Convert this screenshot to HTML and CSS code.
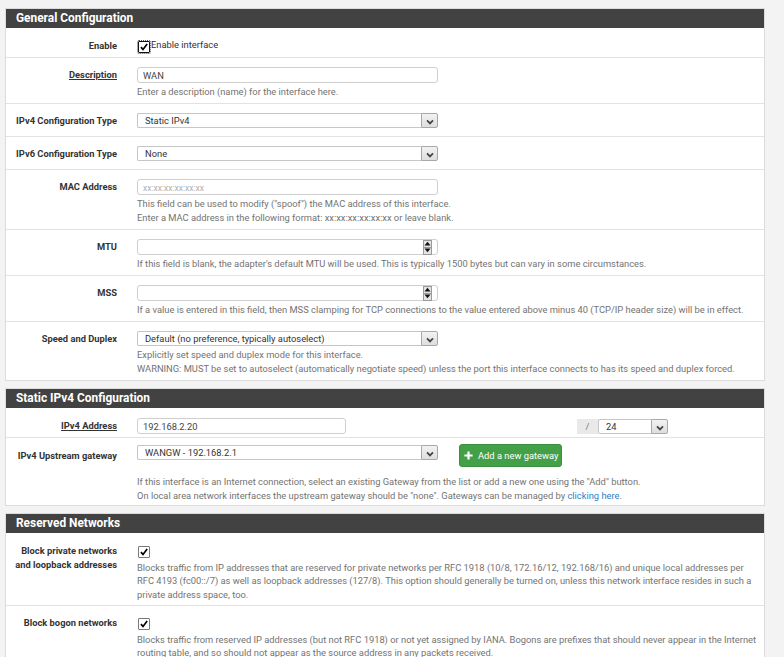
FILE: index.html
```html
<!DOCTYPE html>
<html lang="en">
<head>
<meta charset="utf-8">
<title>Interfaces / WAN</title>
<link rel="stylesheet" href="styles.css">
</head>
<body>
<div class="page">

  <section class="panel">
    <h2 class="panel-title">General Configuration</h2>
    <div class="panel-body">
      <div class="row row-tight">
        <div class="label">Enable</div>
        <div class="field">
          <label class="check-line"><span class="cb cb-focus"><svg viewBox="0 0 12 12" width="12" height="12"><path d="M2.3 6.2 L4.8 8.9 L9.8 2.4" fill="none" stroke="#000" stroke-width="2"/></svg></span>Enable interface</label>
        </div>
      </div>

      <div class="row">
        <div class="label"><span class="req">Description</span></div>
        <div class="field">
          <div class="input"><input type="text" value="WAN"></div>
          <div class="help">Enter a description (name) for the interface here.</div>
        </div>
      </div>

      <div class="row row-select">
        <div class="label">IPv4 Configuration Type</div>
        <div class="field">
          <div class="select"><span class="select-text">Static IPv4</span><span class="select-arrow"><svg viewBox="0 0 8 6" width="8" height="6"><polyline points="1,1.4 4,4.4 7,1.4" fill="none" stroke="#444" stroke-width="1.8"/></svg></span></div>
        </div>
      </div>

      <div class="row row-select">
        <div class="label">IPv6 Configuration Type</div>
        <div class="field">
          <div class="select"><span class="select-text">None</span><span class="select-arrow"><svg viewBox="0 0 8 6" width="8" height="6"><polyline points="1,1.4 4,4.4 7,1.4" fill="none" stroke="#444" stroke-width="1.8"/></svg></span></div>
        </div>
      </div>

      <div class="row">
        <div class="label">MAC Address</div>
        <div class="field">
          <div class="input"><input type="text" placeholder="xx:xx:xx:xx:xx:xx"></div>
          <div class="help">This field can be used to modify ("spoof") the MAC address of this interface.<br>Enter a MAC address in the following format: xx:xx:xx:xx:xx:xx or leave blank.</div>
        </div>
      </div>

      <div class="row">
        <div class="label">MTU</div>
        <div class="field">
          <div class="input num"><input type="text"><span class="spin"><span class="spin-btn"><svg viewBox="0 0 7 5" width="7" height="5"><polygon points="0.5,4.5 3.5,0.8 6.5,4.5" fill="#111"/></svg></span><span class="spin-btn"><svg viewBox="0 0 7 5" width="7" height="5"><polygon points="0.5,0.5 3.5,4.2 6.5,0.5" fill="#111"/></svg></span></span></div>
          <div class="help">If this field is blank, the adapter's default MTU will be used. This is typically 1500 bytes but can vary in some circumstances.</div>
        </div>
      </div>

      <div class="row">
        <div class="label">MSS</div>
        <div class="field">
          <div class="input num"><input type="text"><span class="spin"><span class="spin-btn"><svg viewBox="0 0 7 5" width="7" height="5"><polygon points="0.5,4.5 3.5,0.8 6.5,4.5" fill="#111"/></svg></span><span class="spin-btn"><svg viewBox="0 0 7 5" width="7" height="5"><polygon points="0.5,0.5 3.5,4.2 6.5,0.5" fill="#111"/></svg></span></span></div>
          <div class="help">If a value is entered in this field, then MSS clamping for TCP connections to the value entered above minus 40 (TCP/IP header size) will be in effect.</div>
        </div>
      </div>

      <div class="row">
        <div class="label">Speed and Duplex</div>
        <div class="field">
          <div class="select"><span class="select-text">Default (no preference, typically autoselect)</span><span class="select-arrow"><svg viewBox="0 0 8 6" width="8" height="6"><polyline points="1,1.4 4,4.4 7,1.4" fill="none" stroke="#444" stroke-width="1.8"/></svg></span></div>
          <div class="help">Explicitly set speed and duplex mode for this interface.<br>WARNING: MUST be set to autoselect (automatically negotiate speed) unless the port this interface connects to has its speed and duplex forced.</div>
        </div>
      </div>
    </div>
  </section>

  <section class="panel">
    <h2 class="panel-title">Static IPv4 Configuration</h2>
    <div class="panel-body">
      <div class="row row-tight">
        <div class="label"><span class="req">IPv4 Address</span></div>
        <div class="field addr-field">
          <div class="input addr"><input type="text" value="192.168.2.20"></div>
          <div class="mask">
            <span class="mask-addon">/</span>
            <div class="select select-mask"><span class="select-text">24</span><span class="select-arrow"><svg viewBox="0 0 8 6" width="8" height="6"><polyline points="1,1.4 4,4.4 7,1.4" fill="none" stroke="#444" stroke-width="1.8"/></svg></span></div>
          </div>
        </div>
      </div>

      <div class="row row-gateway">
        <div class="label">IPv4 Upstream gateway</div>
        <div class="field">
          <div class="gw-line">
            <div class="select"><span class="select-text">WANGW - 192.168.2.1</span><span class="select-arrow"><svg viewBox="0 0 8 6" width="8" height="6"><polyline points="1,1.4 4,4.4 7,1.4" fill="none" stroke="#444" stroke-width="1.8"/></svg></span></div>
            <button class="btn-success" type="button"><svg viewBox="0 0 9 9" width="9" height="9"><path d="M3.4 0.4h2.2v3h3v2.2h-3v3h-2.2v-3h-3v-2.2h3z" fill="#fff"/></svg>Add a new gateway</button>
          </div>
          <div class="help">If this interface is an Internet connection, select an existing Gateway from the list or add a new one using the "Add" button.<br>On local area network interfaces the upstream gateway should be "none". Gateways can be managed by <a href="#">clicking here</a>.</div>
        </div>
      </div>
    </div>
  </section>

  <section class="panel">
    <h2 class="panel-title">Reserved Networks</h2>
    <div class="panel-body">
      <div class="row">
        <div class="label">Block private networks<br>and loopback addresses</div>
        <div class="field">
          <label class="check-line"><span class="cb"><svg viewBox="0 0 12 12" width="12" height="12"><path d="M2.3 6.2 L4.8 8.9 L9.8 2.4" fill="none" stroke="#000" stroke-width="2"/></svg></span></label>
          <div class="help help-tight">Blocks traffic from IP addresses that are reserved for private networks per RFC 1918 (10/8, 172.16/12, 192.168/16) and unique local addresses per<br>RFC 4193 (fc00::/7) as well as loopback addresses (127/8). This option should generally be turned on, unless this network interface resides in such a<br>private address space, too.</div>
        </div>
      </div>

      <div class="row">
        <div class="label">Block bogon networks</div>
        <div class="field">
          <label class="check-line"><span class="cb"><svg viewBox="0 0 12 12" width="12" height="12"><path d="M2.3 6.2 L4.8 8.9 L9.8 2.4" fill="none" stroke="#000" stroke-width="2"/></svg></span></label>
          <div class="help help-tight">Blocks traffic from reserved IP addresses (but not RFC 1918) or not yet assigned by IANA. Bogons are prefixes that should never appear in the Internet<br>routing table, and so should not appear as the source address in any packets received.</div>
        </div>
      </div>
    </div>
  </section>

</div>
</body>
</html>
```

FILE: styles.css
```css
* { box-sizing: border-box; }

html, body {
  margin: 0;
  padding: 0;
}

body {
  background: #f3f3f3;
  font-family: Roboto, "Liberation Sans", Arial, sans-serif;
  color: #333;
  font-size: 9.33px;
}

.page {
  padding: 8px 0 0 5px;
  width: 765px;
}

.panel {
  background: #fff;
  border: 1px solid #dcdcdc;
  margin-bottom: 7px;
}

.panel-title {
  margin: 0;
  height: 19px;
  line-height: 19px;
  background: #424242;
  color: #fff;
  font-size: 11.9px;
  font-weight: 700;
  padding-left: 10px;
}

.row {
  display: grid;
  grid-template-columns: 111px 1fr;
  column-gap: 20px;
  padding: 9px 2px 4px 0;
  border-top: 1px solid #e2e2e2;
}

.panel-body .row:first-child {
  border-top: 0;
  padding-top: 10px;
}

.row-tight { padding-bottom: 3px; }
.row-select { padding-bottom: 8px; }

.label {
  text-align: right;
  font-weight: 700;
  color: #333;
  line-height: 14px;
  padding-top: 1px;
}

.req {
  text-decoration: underline;
}

.field {
  min-width: 0;
}

.help {
  margin-top: 2px;
  line-height: 14px;
  color: #737373;
  white-space: nowrap;
}

.help-tight { line-height: 13.3px; margin-top: 2px; }

.help a {
  color: #2d7fc6;
  text-decoration: none;
}

/* text inputs */
.input {
  width: 301px;
  height: 16px;
  border: 1px solid #cfcfcf;
  border-radius: 3px;
  background: #fff;
  display: flex;
  align-items: center;
}

.input input {
  flex: 1;
  min-width: 0;
  height: 100%;
  border: 0;
  outline: 0;
  background: transparent;
  padding: 0 5px;
  font-family: inherit;
  font-size: 9.33px;
  color: #444;
}

.input input::placeholder {
  color: #b0b0b0;
  font-size: 8.5px;
}

.num .spin {
  width: 9px;
  height: 15px;
  margin-right: 5px;
  display: flex;
  flex-direction: column;
}

.spin-btn {
  flex: 1;
  display: flex;
  align-items: center;
  justify-content: center;
  background: #e4e4e4;
  border: 1px solid #9a9a9a;
}

.spin-btn + .spin-btn { border-top: 0; }

/* selects */
.select {
  width: 301px;
  height: 15px;
  display: flex;
}

.select-text {
  flex: 1;
  min-width: 0;
  border: 1px solid #c6c6c6;
  border-right: 0;
  border-radius: 2px 0 0 2px;
  background: #fff;
  padding-left: 7px;
  line-height: 13px;
  color: #333;
  white-space: nowrap;
  overflow: hidden;
}

.select-arrow {
  width: 17px;
  height: 15px;
  border: 1px solid #a8a8a8;
  border-radius: 0 2px 2px 0;
  background: linear-gradient(#f2f2f2, #dedede);
  display: flex;
  align-items: center;
  justify-content: center;
  padding-top: 2px;
}

/* checkboxes */
.check-line {
  display: flex;
  align-items: flex-start;
  height: 16px;
  line-height: 14px;
  color: #333;
}

.cb {
  width: 12px;
  height: 12px;
  margin: 3px 1px 0 1px;
  border: 1px solid #7a7a7a;
  border-radius: 1px;
  background: #fff;
  display: flex;
  align-items: center;
  justify-content: center;
  flex: none;
}

.cb svg { width: 10px; height: 10px; }

.cb-focus {
  border: 1px solid #111;
  outline: 1px dotted #555;
}

/* ipv4 address */
.addr-field {
  display: flex;
}

.addr { width: 209px; }

.mask {
  display: flex;
  margin-left: 231px;
  margin-top: 1px;
}

.mask-addon {
  width: 21px;
  height: 15px;
  background: #e9e9e9;
  color: #777;
  text-align: center;
  line-height: 15px;
}

.select-mask { width: 70px; }

/* gateway */
.row-gateway {
  padding-top: 6px;
  padding-bottom: 2px;
}

.row-gateway .label { padding-top: 5px; }

.gw-line {
  display: flex;
  align-items: flex-start;
  gap: 21px;
}

.gw-line .select { margin-top: 1px; }

.row-gateway .help { margin-top: 8px; }

.btn-success {
  display: flex;
  align-items: center;
  gap: 5px;
  height: 23px;
  padding: 0 3px 0 4px;
  background: #43a047;
  border: 1px solid #3b8f3f;
  border-radius: 3px;
  color: #fff;
  font-family: inherit;
  font-size: 9.33px;
}
```
